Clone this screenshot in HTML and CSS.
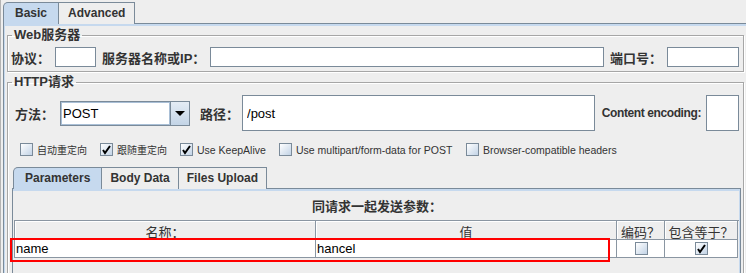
FILE: index.html
```html
<!DOCTYPE html>
<html lang="zh-CN">
<head>
    <meta charset="UTF-8">
    <title>HTTP请求</title>
    <link rel="stylesheet" href="styles.css">
</head>
<body>
    <div class="window">
        <div class="tabs">
            <div class="tab active">Basic</div>
            <div class="tab">Advanced</div>
        </div>

        <div class="tab-panel">
            <fieldset class="group">
                <legend>Web服务器</legend>
                <div class="row">
                    <label class="lbl">协议：</label>
                    <input type="text" class="field proto">
                    <label class="lbl gap">服务器名称或IP：</label>
                    <input type="text" class="field server">
                    <label class="lbl gap">端口号：</label>
                    <input type="text" class="field port">
                </div>
            </fieldset>

            <fieldset class="group http">
                <legend>HTTP请求</legend>
                <div class="row tall">
                    <label class="lbl">方法：</label>
                    <div class="combo">
                        <div class="combo-value">POST</div>
                        <div class="combo-btn"><span class="arrow"></span></div>
                    </div>
                    <label class="lbl path-lbl">路径：</label>
                    <input type="text" class="field path" value="/post">
                    <label class="lbl enc-lbl">Content encoding:</label>
                    <input type="text" class="field enc">
                </div>

                <div class="checks">
                    <div class="check opt-1"><span class="box"></span><span class="cjk">自动重定向</span></div>
                    <div class="check opt-2"><span class="box checked"></span><span class="cjk">跟随重定向</span></div>
                    <div class="check opt-3"><span class="box checked"></span>Use KeepAlive</div>
                    <div class="check opt-4"><span class="box"></span>Use multipart/form-data for POST</div>
                    <div class="check"><span class="box"></span>Browser-compatible headers</div>
                </div>

                <div class="tabs sub-tabs">
                    <div class="tab active">Parameters</div>
                    <div class="tab">Body Data</div>
                    <div class="tab">Files Upload</div>
                </div>

                <div class="sub-panel">
                    <div class="caption">同请求一起发送参数：</div>
                    <div class="table-wrap">
                        <div class="grid">
                            <div class="th">名称：</div>
                            <div class="th">值</div>
                            <div class="th">编码？</div>
                            <div class="th">包含等于？</div>

                            <div class="td">name</div>
                            <div class="td">hancel</div>
                            <div class="td center"><span class="box"></span></div>
                            <div class="td center"><span class="box checked"></span></div>
                        </div>
                        <!-- row marked in red -->
                        <div class="highlight"></div>
                    </div>
                </div>
            </fieldset>
        </div>
    </div>
</body>
</html>
```

FILE: styles.css
```css
body {
    margin: 0;
    background: #eeeeee;
    font-family: "Liberation Sans", "Noto Sans CJK SC", sans-serif;
    font-size: 13px;
    color: #333333;
}

.window {
    height: 100vh;
    overflow: hidden;
    box-sizing: border-box;
    padding: 2px 0 0 2px;
    border-left: 1px solid #b4b4b4;
}

/* tabs (Metal look) */
.tabs {
    display: flex;
    height: 22px;
}

.tab {
    height: 22px;
    box-sizing: border-box;
    padding: 0 9px;
    border: 1px solid #7a8a99;
    border-bottom: none;
    line-height: 20px;
    font-size: 12px;
    font-weight: bold;
    color: #333333;
    background: #eeeeee;
}

.tab + .tab {
    margin-left: -1px;
}

.tab.active {
    position: relative;
    z-index: 1;
    padding: 0 11px;
    background: #c6d9ee;
    border-top-left-radius: 5px;
}

.tab-panel {
    margin-top: -1px;
    border-top: 1px solid #7a8a99;
    border-left: 1px solid #7a8a99;
    box-shadow: inset 1px 2px 0 #c6d9ee;
    padding: 3px 2px 0 3px;
    height: 300px;
}

/* group boxes */
.group {
    margin: 0;
    padding: 4px 4px 4px 3px;
    border: 1px solid #a6a6a6;
    box-shadow: inset 1px 1px 0 #ffffff, 1px 1px 0 #ffffff;
    min-width: 0;
}

.group legend {
    margin-left: 1px;
    padding: 0 2px;
    font-size: 13px;
    line-height: 16px;
    font-weight: bold;
}

.http {
    margin-top: 2px;
    padding: 5px 2px 30px 3px;
}

.row {
    display: flex;
    align-items: center;
    height: 20px;
}

.row.tall {
    height: 36px;
    padding-left: 4px;
    padding-right: 2px;
}

.lbl {
    font-weight: bold;
    font-size: 13px;
    white-space: nowrap;
}

.lbl.gap {
    margin-left: 6px;
}

.field {
    height: 20px;
    box-sizing: border-box;
    margin: 0 0 0 5px;
    padding: 0 4px;
    border: 1px solid #7a8a99;
    background: #ffffff;
    font-family: "Liberation Sans", sans-serif;
    font-size: 13px;
    color: #000000;
    outline: none;
}

.proto { width: 41px; }
.server { flex: 1; min-width: 0; }
.port { width: 72px; }

.combo {
    display: flex;
    width: 130px;
    height: 25px;
    box-sizing: border-box;
    margin-left: 6px;
    border: 1px solid #7a8a99;
}

.combo-value {
    flex: 1;
    background: #ffffff;
    box-shadow: inset 0 0 0 1px #a9bfd6;
    padding-left: 2px;
    line-height: 23px;
    color: #000000;
}

.combo-btn {
    width: 18px;
    border-left: 1px solid #7a8a99;
    background: linear-gradient(#e4ecf5, #c3d4e6);
    display: flex;
    align-items: center;
    justify-content: center;
}

.arrow {
    width: 0;
    height: 0;
    border-left: 5px solid transparent;
    border-right: 5px solid transparent;
    border-top: 5px solid #000000;
}

.path-lbl { margin-left: 10px; }

.path {
    flex: 1;
    min-width: 0;
    height: 36px;
    margin-left: 3px;
}

.enc-lbl {
    margin-left: 7px;
    font-size: 12px;
    letter-spacing: -0.4px;
}

.enc {
    width: 33px;
    height: 36px;
    margin-left: 5px;
}

/* checkbox row */
.checks {
    display: flex;
    align-items: center;
    height: 15px;
    margin-top: 11px;
    padding-left: 9px;
    font-size: 10.5px;
    color: #333333;
}

.check {
    display: flex;
    align-items: center;
    gap: 4px;
    white-space: nowrap;
}

.opt-1, .opt-2 { width: 80px; }
.opt-3 { width: 99px; }
.opt-4 { width: 187px; }

.cjk {
    font-family: "Noto Sans CJK SC", sans-serif;
    font-size: 10px;
}

.box {
    display: inline-block;
    width: 13px;
    height: 13px;
    box-sizing: border-box;
    border: 1px solid #7a8a99;
    background: linear-gradient(135deg, #ffffff, #c2d3e6);
}

.box.checked {
    background: url("data:image/svg+xml,%3Csvg xmlns='http://www.w3.org/2000/svg' width='11' height='11'%3E%3Cpath d='M2 6 L4 9 L9 2' fill='none' stroke='%23000' stroke-width='2'/%3E%3C/svg%3E") no-repeat center, linear-gradient(135deg, #ffffff, #c2d3e6);
}

/* inner tabs */
.sub-tabs {
    margin: 10px 0 0 2px;
}

.sub-tabs .tab {
    padding: 0 8px;
}

.sub-tabs .tab.active {
    padding: 0 11px;
}

.sub-panel {
    margin: -1px 0 0 1px;
    border: 1px solid #7a8a99;
    border-bottom: none;
    box-shadow: inset 0 2px 0 #c6d9ee, inset -1px 0 0 #c6d9ee;
    padding: 10px 0 30px 1px;
}

.caption {
    text-align: center;
    font-weight: bold;
    line-height: 16px;
}

.table-wrap {
    position: relative;
    margin-top: 5px;
}

.grid {
    display: grid;
    grid-template-columns: 301px 301px 48px 73px;
    width: 724px;
    border-top: 1px solid #8a96a2;
    border-left: 1px solid #8a96a2;
}

.th {
    height: 19px;
    box-sizing: border-box;
    padding-top: 3px;
    border-right: 1px solid #8a96a2;
    border-bottom: 1px solid #8a96a2;
    box-shadow: inset 1px 1px 0 #ffffff;
    text-align: center;
    font-family: "Noto Sans CJK SC", sans-serif;
    font-size: 13px;
    line-height: 15px;
}

.td {
    height: 18px;
    box-sizing: border-box;
    padding-left: 1px;
    border-right: 1px solid #8a96a2;
    border-bottom: 1px solid #8a96a2;
    background: #ffffff;
    line-height: 17px;
    color: #000000;
}

.td.center {
    display: flex;
    align-items: center;
    justify-content: center;
}

.highlight {
    position: absolute;
    left: -4px;
    top: 18px;
    width: 600px;
    height: 24px;
    box-sizing: border-box;
    border: 2px solid #ff0000;
}
```
